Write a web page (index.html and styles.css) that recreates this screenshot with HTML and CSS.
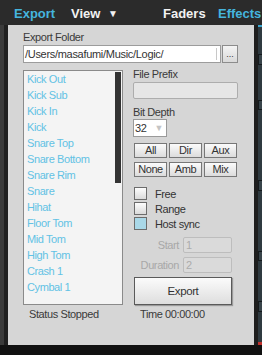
FILE: index.html
```html
<!DOCTYPE html>
<html lang="en">
<head>
    <meta charset="UTF-8">
    <meta name="viewport" content="width=device-width, initial-scale=1.0">
    <title>Export</title>
    <link rel="stylesheet" href="styles.css">
</head>
<body>

    <div class="app">
        <header class="topbar">
            <span class="tab tab-export active">Export</span>
            <span class="tab tab-view">View <span class="caret">▼</span></span>
            <span class="tab tab-faders">Faders</span>
            <span class="tab tab-effects active">Effects</span>
        </header>

        <div class="main">
            <div class="edge-left"></div>

            <div class="panel">
                <div class="label">Export Folder</div>
                <div class="folder-row">
                    <div class="folder-input">
                        <span class="folder-path">/Users/masafumi/Music/Logic/</span>
                        <span class="folder-mark"></span>
                    </div>
                    <div class="browse-btn">...</div>
                </div>

                <div class="columns">
                    <div class="track-list">
                        <ul class="tracks">
                            <li>Kick Out</li>
                            <li>Kick Sub</li>
                            <li>Kick In</li>
                            <li>Kick</li>
                            <li>Snare Top</li>
                            <li>Snare Bottom</li>
                            <li>Snare Rim</li>
                            <li>Snare</li>
                            <li>Hihat</li>
                            <li>Floor Tom</li>
                            <li>Mid Tom</li>
                            <li>High Tom</li>
                            <li>Crash 1</li>
                            <li>Cymbal 1</li>
                        </ul>
                        <div class="scroll-track"><div class="scroll-thumb"></div></div>
                    </div>

                    <div class="options">
                        <div class="label">File Prefix</div>
                        <div class="prefix-input"></div>

                        <div class="label label-bit">Bit Depth</div>
                        <div class="select">
                            <span>32</span>
                            <span class="select-arrow">▼</span>
                        </div>

                        <div class="select-grid">
                            <div class="small-btn">All</div>
                            <div class="small-btn">Dir</div>
                            <div class="small-btn">Aux</div>
                            <div class="small-btn">None</div>
                            <div class="small-btn">Amb</div>
                            <div class="small-btn">Mix</div>
                        </div>

                        <div class="checks">
                            <div class="check-row"><span class="box"></span>Free</div>
                            <div class="check-row"><span class="box"></span>Range</div>
                            <div class="check-row"><span class="box checked"></span>Host sync</div>
                        </div>

                        <div class="field-row">
                            <span class="field-label">Start</span>
                            <span class="field-input">1</span>
                        </div>
                        <div class="field-row">
                            <span class="field-label">Duration</span>
                            <span class="field-input">2</span>
                        </div>

                        <div class="export-btn">Export</div>
                    </div>
                </div>

                <div class="status-row">
                    <span class="status">Status Stopped</span>
                    <span class="time">Time 00:00:00</span>
                </div>
            </div>

            <div class="edge-right">
                <div class="edge-line"></div>
                <div class="edge-strip">
                    <div class="strip-cyan"></div>
                    <div class="strip-box box-a"></div>
                    <div class="strip-box box-b"></div>
                    <div class="strip-box box-c"></div>
                    <div class="strip-box box-d"></div>
                    <div class="strip-box box-e"></div>
                    <div class="strip-red"></div>
                </div>
            </div>
        </div>

        <div class="bottombar"></div>
    </div>

</body>
</html>
```

FILE: styles.css
```css
body {
    margin: 0;
    font-family: 'Liberation Sans', Arial, sans-serif;
    background-color: #111;
    overflow: hidden;
}
.app {
    width: 262px;
    height: 355px;
    display: flex;
    flex-direction: column;
}
.topbar {
    height: 25px;
    background-color: #2b2b2b;
    display: flex;
    align-items: center;
    padding-left: 14px;
    box-sizing: border-box;
    font-size: 13px;
    font-weight: bold;
    color: #f2f2f2;
    white-space: nowrap;
    overflow: hidden;
}
.tab {
    display: inline-block;
    padding-top: 1px;
}
.tab-export { width: 57px; }
.tab-view { width: 92px; }
.tab-faders { width: 55px; }
.active {
    color: #45b4de;
}
.caret {
    font-size: 10px;
    margin-left: 4px;
    vertical-align: 1px;
}
.main {
    height: 320px;
    display: flex;
}
.edge-left {
    width: 8px;
    background: linear-gradient(90deg, #3a3a3a 0, #3a3a3a 4px, #1f1f1f 4px);
}
.panel {
    flex: 1;
    background-color: #d6d6d6;
    padding: 5px 0 0 15px;
    font-size: 11px;
    letter-spacing: -0.4px;
    color: #3a3a3a;
}
.label {
    line-height: 14px;
}
.folder-row {
    display: flex;
    margin-top: 1px;
    gap: 1px;
    height: 18px;
}
.folder-input {
    width: 198px;
    box-sizing: border-box;
    border: 1px solid #9c9c9c;
    background-color: #fff;
    display: flex;
    align-items: center;
    padding-left: 1px;
    color: #333;
    letter-spacing: -0.3px;
}
.folder-path {
    flex: 1;
}
.folder-mark {
    width: 1px;
    height: 12px;
    background-color: #c8c8c8;
    margin-right: 3px;
}
.browse-btn {
    width: 16px;
    box-sizing: border-box;
    border: 1px solid #8c8c8c;
    background: linear-gradient(#f4f4f4, #d9d9d9);
    text-align: center;
    font-size: 9px;
    line-height: 17px;
    letter-spacing: 0;
    color: #333;
}
.columns {
    display: flex;
    gap: 10px;
    margin-top: 4px;
}
.track-list {
    width: 100px;
    height: 235px;
    margin-top: 3px;
    box-sizing: border-box;
    border: 1px solid #8a8a8a;
    background-color: #f4f4f4;
    display: flex;
}
.tracks {
    list-style: none;
    margin: 0;
    padding: 0 0 0 3px;
    flex: 1;
    color: #62c2e4;
}
.tracks li {
    line-height: 16px;
    white-space: nowrap;
}
.scroll-track {
    width: 6px;
    margin: 1px 1px 0 0;
}
.scroll-thumb {
    height: 111px;
    background-color: #333;
}
.options {
    width: 105px;
}
.prefix-input {
    height: 17px;
    margin-top: 1px;
    box-sizing: border-box;
    border: 1px solid #adadad;
    border-radius: 2px;
    background-color: #e6e6e6;
}
.label-bit {
    margin-top: 6px;
}
.select {
    width: 34px;
    height: 18px;
    box-sizing: border-box;
    border: 1px solid #9a9a9a;
    background-color: #fff;
    display: flex;
    align-items: center;
    justify-content: space-between;
    padding: 0 3px 0 1px;
    color: #333;
}
.select-arrow {
    font-size: 9px;
    color: #c4c4c4;
}
.select-grid {
    display: grid;
    grid-template-columns: repeat(3, 33px);
    grid-auto-rows: 15px;
    column-gap: 2px;
    row-gap: 4px;
    margin: 6px 0 0 1px;
}
.small-btn {
    box-sizing: border-box;
    border: 1px solid #777;
    background: linear-gradient(#fbfbfb, #dcdcdc);
    text-align: center;
    line-height: 13px;
    color: #333;
}
.checks {
    margin: 10px 0 0 1px;
    display: flex;
    flex-direction: column;
    gap: 2px;
}
.check-row {
    display: flex;
    align-items: center;
    height: 13px;
    color: #333;
}
.box {
    width: 13px;
    height: 13px;
    box-sizing: border-box;
    border: 1px solid #6c6c6c;
    background: linear-gradient(#fdfdfd, #dadada);
    margin-right: 8px;
}
.box.checked {
    background: #a9d8e8;
}
.field-row {
    display: flex;
    align-items: center;
    gap: 4px;
    height: 16px;
    margin-top: 4px;
}
.checks + .field-row {
    margin-top: 7px;
}
.field-label {
    width: 46px;
    text-align: right;
    color: #a8a8a8;
}
.field-input {
    width: 49px;
    height: 16px;
    box-sizing: border-box;
    border: 1px solid #bdbdbd;
    border-radius: 2px;
    background-color: #dadada;
    color: #acacac;
    line-height: 14px;
    padding-left: 2px;
}
.export-btn {
    width: 98px;
    height: 28px;
    margin: 4px 0 0 1px;
    box-sizing: border-box;
    border: 1px solid #5a5a5a;
    background: linear-gradient(#fbfbfb, #dedede);
    box-shadow: 1px 1px 1px #9a9a9a;
    text-align: center;
    line-height: 26px;
    font-size: 11.5px;
    color: #333;
}
.status-row {
    display: flex;
    margin-top: 2px;
    line-height: 14px;
    color: #3a3a3a;
}
.status {
    width: 110px;
    padding-left: 6px;
    box-sizing: border-box;
}
.time {
    padding-left: 7px;
}
.edge-right {
    width: 8px;
    display: flex;
}
.edge-line {
    width: 4px;
    background-color: #1e1e1e;
}
.edge-strip {
    flex: 1;
    background-color: #2f3a40;
    display: flex;
    flex-direction: column;
}
.strip-cyan {
    height: 3px;
    background-color: #3aa6cf;
}
.strip-box {
    height: 11px;
    border: 1px solid #151a1d;
    border-right: none;
    background-color: #38444a;
}
.box-a { margin-top: 27px; }
.box-b { margin-top: 35px; }
.box-c { margin-top: 70px; }
.box-d { margin-top: 60px; }
.box-e { margin-top: 40px; }
.strip-red {
    height: 4px;
    margin-top: 30px;
    background-color: #c0302b;
}
.bottombar {
    flex: 1;
    background-color: #111;
}
```
